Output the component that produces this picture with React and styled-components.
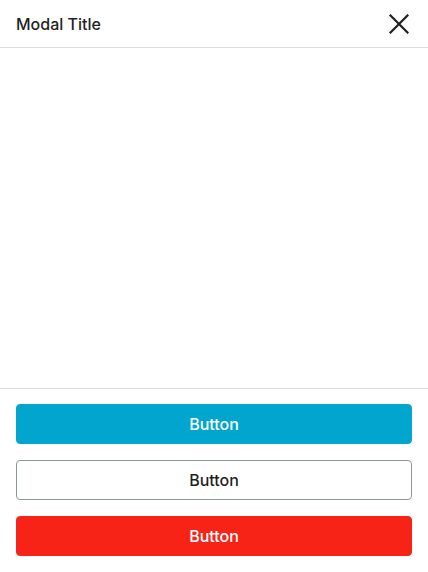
import React from "react";
import styled, { createGlobalStyle } from "styled-components";

const GlobalStyle = createGlobalStyle`
  html, body, #root {
    margin: 0;
    padding: 0;
    height: 100%;
  }
  body {
    font-family: Inter, "Noto Sans", sans-serif;
    background: #ffffff;
    color: #1f1f1f;
  }
  * {
    box-sizing: border-box;
  }
`;

const Modal = styled.div`
  display: flex;
  flex-direction: column;
  height: 100vh;
  background: #fff;
`;

const Header = styled.header`
  height: 48px;
  display: flex;
  align-items: center;
  justify-content: space-between;
  padding: 0 18px 0 16px;
  border-bottom: 1px solid #dcdcdc;
`;

const Title = styled.h2`
  margin: 0;
  font-size: 16px;
  font-weight: 500;
  color: #1f1f1f;
`;

const CloseButton = styled.button`
  display: flex;
  align-items: center;
  justify-content: center;
  width: 22px;
  height: 22px;
  padding: 0;
  border: none;
  background: none;
  color: #1f1f1f;
  cursor: pointer;
`;

const Body = styled.div`
  flex: 1;
`;

const Footer = styled.footer`
  display: flex;
  flex-direction: column;
  gap: 16px;
  padding: 15px 16px 16px;
  border-top: 1px solid #dcdcdc;
`;

const variants = {
  primary: { bg: "#01a5cd", color: "#fff", border: "#01a5cd" },
  secondary: { bg: "#fff", color: "#1f1f1f", border: "#8c979c" },
  danger: { bg: "#f72317", color: "#fff", border: "#f72317" },
};

const Button = styled.button`
  height: 40px;
  width: 100%;
  border-radius: 4px;
  border: 1px solid ${(p) => variants[p.$variant].border};
  background: ${(p) => variants[p.$variant].bg};
  color: ${(p) => variants[p.$variant].color};
  font-family: Inter, "Noto Sans", sans-serif;
  font-size: 16px;
  font-weight: 500;
  cursor: pointer;
`;

const CloseIcon = () => (
  <svg width="20" height="20" viewBox="0 0 20 20" fill="none">
    <path
      d="M1.5 1.5L18.5 18.5M18.5 1.5L1.5 18.5"
      stroke="currentColor"
      strokeWidth="2.2"
      strokeLinecap="square"
    />
  </svg>
);

export default function App() {
  return (
    <>
      <GlobalStyle />
      <Modal>
        <Header>
          <Title>Modal Title</Title>
          <CloseButton aria-label="Close">
            <CloseIcon />
          </CloseButton>
        </Header>
        <Body />
        <Footer>
          <Button $variant="primary">Button</Button>
          <Button $variant="secondary">Button</Button>
          <Button $variant="danger">Button</Button>
        </Footer>
      </Modal>
    </>
  );
}
